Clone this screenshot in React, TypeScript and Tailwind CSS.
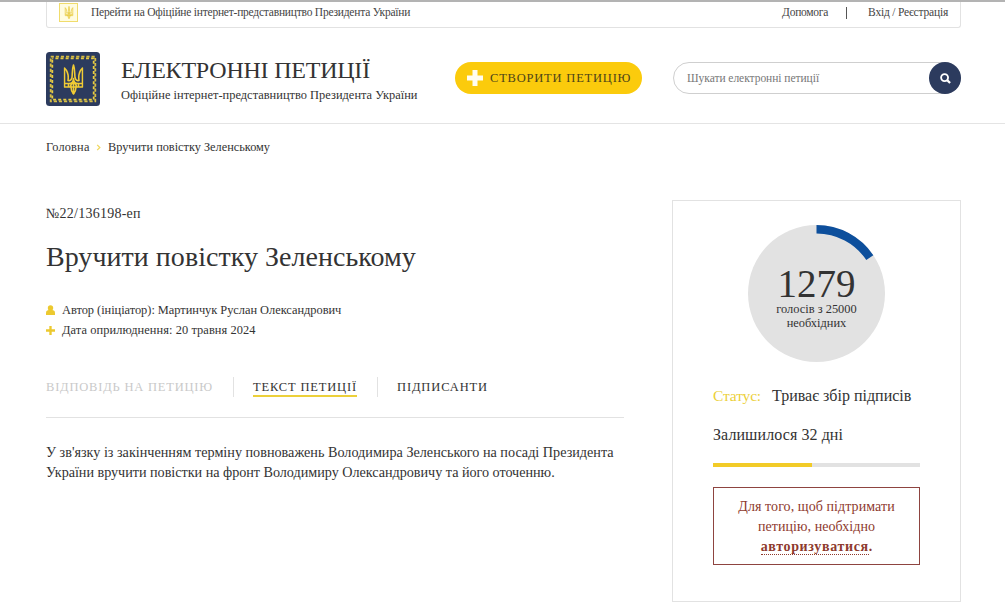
import React from "react";

const Trident = ({ className }: { className?: string }) => (
  <svg
    viewBox="0 0 20 31"
    className={className}
    fill="none"
    stroke="currentColor"
    strokeWidth="1.6"
    strokeLinejoin="round"
  >
    <path d="M1 4v19h6.500c0 3 1 5 2.500 7 1.500-2 2.500-4 2.500-7H19V4c-3 3-4.200 8-3.500 12.500-2 .5-3.500-.5-4-3C11 9 11.500 5 10 1 8.500 5 9 9 8.500 13.500c-.5 2.500-2 3.500-4 3C5.200 12 4 7 1 4z" />
    <path d="M1 19.500h4.500c2.500 0 4.500-2 4.500-5 0 3 2 5 4.500 5H19M7 23c0-2 1-3.500 3-4.500 2 1 3 2.500 3 4.500M10 15v15M7 23h6M5 19.500V23M15 19.500V23" />
  </svg>
);

const Logo = () => (
  <svg viewBox="0 0 54 54" className="size-[54px] shrink-0">
    <rect width="54" height="54" rx="3.500" fill="#2c3b5e" />
    <rect x="4.700" y="4.700" width="44.600" height="44.600" fill="none" stroke="#d6bd45" strokeWidth="1.800" strokeDasharray="3.200 1.900" />
    <rect x="6.300" y="6.300" width="41.400" height="41.400" fill="none" stroke="#e8cc43" strokeWidth="1.800" strokeDasharray="3 2.100" strokeDashoffset="2" />
    <svg x="17.500" y="12" width="20" height="31" className="text-[#f0cb35]">
      <Trident />
    </svg>
  </svg>
);

const TopBar = () => (
  <div className="border-t-2 border-[#b3b3b3]">
    <div className="ml-[46px] flex h-[26px] w-[915px] items-center rounded-b-[3px] border-x border-b border-[#e2e2e2] px-3 text-[11.5px] text-[#444]">
      <div className="mb-1 flex size-[19px] items-center justify-center border border-[#f0dc6c] bg-[#fffce0] text-[#e6c52c]">
        <Trident className="h-[13px] w-[10px]" />
      </div>
      <a href="#" className="mb-[4px] ml-[13px] tracking-[-0.22px] whitespace-nowrap">
        Перейти на Офіційне інтернет-представництво Президента України
      </a>
      <a href="#" className="mb-[4px] ml-auto tracking-[-0.27px]">
        Допомога
      </a>
      <span className="mr-[21px] mb-[4px] ml-[18px] h-[12px] w-px bg-[#555]" />
      <a href="#" className="mb-[4px] tracking-[-0.2px]">
        Вхід / Реєстрація
      </a>
    </div>
  </div>
);

const Header = () => (
  <header className="h-[96px] border-b border-[#e4e4e4]">
    <div className="ml-[46px] flex w-[915px] items-start pt-6">
      <Logo />
      <div className="ml-[21px] w-[334px]">
        <h1 className="mt-[4px] text-[24px] leading-[28px] tracking-[-0.22px] whitespace-nowrap">
          ЕЛЕКТРОННІ ПЕТИЦІЇ
        </h1>
        <p className="mt-[3px] text-[12.4px] leading-[16px] tracking-[0.02px] whitespace-nowrap">
          Офіційне інтернет-представництво Президента України
        </p>
      </div>
      <button className="mt-[10px] flex h-[32px] w-[187px] items-center rounded-full bg-[#fbcb0c] pl-3 text-[12.5px] tracking-[0.8px] whitespace-nowrap text-[#4d4419]">
        <svg viewBox="0 0 16 16" className="mr-[7px] size-[16px] shrink-0">
          <path d="M5.500 0h5v5.500H16v5h-5.500V16h-5v-5.500H0v-5h5.500z" fill="#fffdf0" />
        </svg>
        СТВОРИТИ ПЕТИЦІЮ
      </button>
      <div className="mt-[10px] ml-[31px] flex h-[32px] w-[288px] items-center justify-between rounded-full border border-[#cfcfcf] pl-[13px] text-[11.5px] tracking-[-0.04px] text-[#777]">
        <span className="pt-px">Шукати електронні петиції</span>
        <button className="-mr-px flex size-[32px] items-center justify-center rounded-full bg-[#2c3b5e]">
          <svg viewBox="0 0 12 12" className="size-[11px]" fill="none" stroke="#fff" strokeWidth="2">
            <circle cx="5" cy="5" r="3.800" />
            <path d="M7.800 7.800l3.200 3.200" strokeWidth="2.400" />
          </svg>
        </button>
      </div>
    </div>
  </header>
);

const Tabs = () => (
  <nav className="mt-[37px] flex h-[41px] items-start border-b border-[#e2e2e2] text-[12.5px] leading-[20px] whitespace-nowrap">
    <a href="#" className="w-[187px] tracking-[0.8px] text-[#c9c9c9]">
      ВІДПОВІДЬ НА ПЕТИЦІЮ
    </a>
    <span className="h-[20px] w-px bg-[#e2e2e2]" />
    <a href="#" className="ml-[19px] h-[20px] w-[104px] border-b-2 border-[#ecd03a] tracking-[0.84px]">
      ТЕКСТ ПЕТИЦІЇ
    </a>
    <span className="ml-[20px] h-[20px] w-px bg-[#e2e2e2]" />
    <a href="#" className="ml-[19px] tracking-[0.88px]">
      ПІДПИСАНТИ
    </a>
  </nav>
);

const Petition = () => (
  <main className="w-[578px] whitespace-nowrap">
    <div className="mt-[5px] text-[14px] leading-[18px] tracking-[0.24px]">№22/136198-еп</div>
    <h2 className="mt-[16px] text-[28px] leading-[36px] tracking-[0.03px]">
      Вручити повістку Зеленському
    </h2>
    <ul className="mt-[25px] text-[12.4px] leading-[20px]">
      <li className="flex h-[20px] items-center">
        <svg viewBox="0 0 10 12" className="mr-[7px] h-[11px] w-[9px]" fill="#ecc92f">
          <circle cx="5" cy="3.200" r="3" />
          <path d="M0 11V8.500C0 6 2 5.500 5 5.500s5 .5 5 3V11z" />
        </svg>
        <span className="tracking-[-0.03px]">
          Автор (ініціатор): Мартинчук Руслан Олександрович
        </span>
      </li>
      <li className="flex h-[20px] items-center">
        <svg viewBox="0 0 10 10" className="mr-[7px] size-[9px]" fill="#ecc92f">
          <path d="M3.700 0h2.600v3.700H10v2.600H6.300V10H3.700V6.300H0V3.700h3.700z" />
        </svg>
        <span className="tracking-[0.08px]">Дата оприлюднення: 20 травня 2024</span>
      </li>
    </ul>
    <Tabs />
    <p className="mt-[24px] text-[14.2px] leading-[20px]">
      У зв'язку із закінченням терміну повноважень Володимира Зеленського на посаді Президента
      <br />
      <span className="tracking-[-0.03px]">
        України вручити повістки на фронт Володимиру Олександровичу та його оточенню.
      </span>
    </p>
  </main>
);

const VoteCounter = () => (
  <div className="mx-auto grid size-[137px] place-items-center">
    <svg viewBox="0 0 137 137" className="col-start-1 row-start-1 size-[137px]">
      <circle cx="68.500" cy="68.500" r="68.500" fill="#e2e2e2" />
      <path d="M68.500 4.250A64.250 64.250 0 0 1 121.800 32.600" fill="none" stroke="#0d4f9c" strokeWidth="8.500" />
    </svg>
    <div className="col-start-1 row-start-1 pt-[9px] text-center text-[12.4px] leading-[14px] whitespace-nowrap">
      <div className="h-[35px] text-[39px] leading-[34px]">1279</div>
      <div>голосів з 25000</div>
      <div>необхідних</div>
    </div>
  </div>
);

const Sidebar = () => (
  <aside className="h-[402px] w-[289px] border border-[#e2e2e2] px-10 pt-6 whitespace-nowrap">
    <VoteCounter />
    <div className="mt-[23px] flex h-[22px] items-center">
      <span className="w-[59px] text-[15.5px] tracking-[-0.15px] text-[#ecd03a]">Статус:</span>
      <span className="text-[16px]">Триває збір підписів</span>
    </div>
    <div className="mt-[17px] h-[22px] text-[16px] leading-[22px] tracking-[0.08px]">
      Залишилося 32 дні
    </div>
    <div className="mt-[17px] h-[4px] bg-[#e2e2e2]">
      <div className="h-full w-[48%] bg-[#f2cb27]" />
    </div>
    <div className="mt-[20px] h-[78px] border border-[#8e4440] pt-[9px] text-center text-[14px] leading-[20px] tracking-[0.07px] text-[#8e3a2e]">
      Для того, щоб підтримати
      <br />
      петицію, необхідно
      <br />
      <a href="#" className="border-b border-dotted border-[#8e3a2e] font-bold tracking-[0.65px]">
        авторизуватися
      </a>
      <b>.</b>
    </div>
  </aside>
);

const App = () => {
  return (
    <div className="h-[604px] w-[1005px] overflow-hidden bg-white font-['Liberation_Serif',serif] text-[#333]">
      <TopBar />
      <Header />
      <div className="ml-[46px] w-[915px]">
        <div className="flex h-[46px] items-center text-[12.3px] whitespace-nowrap">
          <a href="#" className="w-[44px] tracking-[0.2px]">
            Головна
          </a>
          <svg viewBox="0 0 5 8" className="mr-[7px] ml-[6px] h-[7px] w-[5px]" fill="none" stroke="#f0d860" strokeWidth="1.500">
            <path d="M1 1l3 3-3 3" />
          </svg>
          <span>Вручити повістку Зеленському</span>
        </div>
        <div className="mt-[30px] flex items-start justify-between">
          <Petition />
          <Sidebar />
        </div>
      </div>
    </div>
  );
};

export default App;
